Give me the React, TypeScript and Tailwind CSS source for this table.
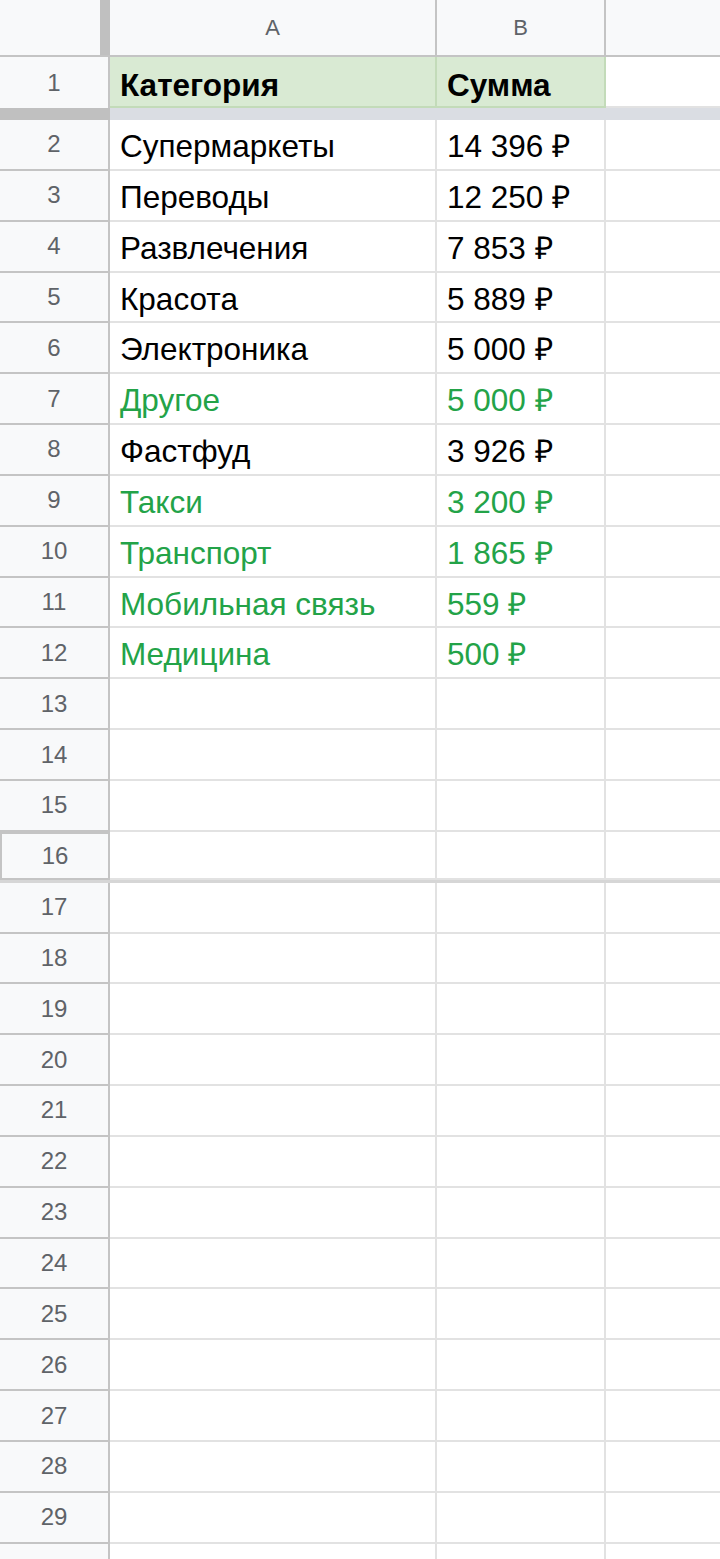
import React from "react";

type Row = { n: number; a?: string; b?: string; green?: boolean };

const data: Row[] = [
  { n: 2, a: "Супермаркеты", b: "14 396 ₽" },
  { n: 3, a: "Переводы", b: "12 250 ₽" },
  { n: 4, a: "Развлечения", b: "7 853 ₽" },
  { n: 5, a: "Красота", b: "5 889 ₽" },
  { n: 6, a: "Электроника", b: "5 000 ₽" },
  { n: 7, a: "Другое", b: "5 000 ₽", green: true },
  { n: 8, a: "Фастфуд", b: "3 926 ₽" },
  { n: 9, a: "Такси", b: "3 200 ₽", green: true },
  { n: 10, a: "Транспорт", b: "1 865 ₽", green: true },
  { n: 11, a: "Мобильная связь", b: "559 ₽", green: true },
  { n: 12, a: "Медицина", b: "500 ₽", green: true },
];

for (let i = 13; i <= 30; i++) data.push({ n: i });

export default function App() {
  return (
    <div className="w-[720px] h-[1559px] overflow-hidden bg-white font-['Liberation_Sans',Arial,sans-serif]">
      {/* Column header */}
      <div className="flex h-[57px] border-b-2 border-[#c4c4c4] bg-[#f8f9fa]">
        <div className="w-[100px] shrink-0" />
        <div className="w-[10px] shrink-0 bg-[#c0c0c0]" />
        <div className="w-[327px] shrink-0 border-r-2 border-[#c4c4c4] flex items-center justify-center text-[22px] text-[#5f6368]">
          A
        </div>
        <div className="w-[169px] shrink-0 border-r-2 border-[#c4c4c4] flex items-center justify-center text-[22px] text-[#5f6368]">
          B
        </div>
        <div className="flex-1" />
      </div>

      {/* Row 1 */}
      <div className="flex h-[51px]">
        <div className="w-[110px] shrink-0 border-r-2 border-[#c4c4c4] bg-[#f8f9fa] flex items-center justify-center text-[24px] text-[#5f6368]">
          1
        </div>
        <div className="w-[327px] shrink-0 bg-[#d9ead3] border-r-2 border-b-2 border-[#c3dbb9] pl-[10px] pt-[13px] text-[31.5px] leading-[31px] font-bold text-black whitespace-nowrap">
          Категория
        </div>
        <div className="w-[169px] shrink-0 bg-[#d9ead3] border-r-2 border-b-2 border-[#c3dbb9] pl-[10px] pt-[13px] text-[31.5px] leading-[31px] font-bold text-black whitespace-nowrap">
          Сумма
        </div>
        <div className="flex-1 border-b-2 border-[#e2e2e2]" />
      </div>

      {/* Freeze bar */}
      <div className="flex h-[12px]">
        <div className="w-[110px] shrink-0 bg-[#c0c0c0]" />
        <div className="flex-1 bg-[#dadde3]" />
      </div>

      {/* Data rows */}
      {data.map((r) => (
        <div
          key={r.n}
          className={`flex h-[50.85px] ${r.n === 16 ? "border-b-[3px] border-[#d6d6d6]" : ""}`}
        >
          <div
            className={`w-[110px] shrink-0 border-r-2 border-b-2 border-[#c4c4c4] bg-[#f8f9fa] flex items-center justify-center text-[24px] text-[#5f6368] ${r.n === 16 ? "border-l-2 border-t-2" : ""}`}
          >
            {r.n}
          </div>
          <div
            className={`w-[327px] shrink-0 border-r-2 border-b-2 border-[#e2e2e2] pl-[10px] pt-[11px] text-[31.5px] leading-[31px] whitespace-nowrap ${r.green ? "text-[#23a348]" : "text-black"}`}
          >
            {r.a}
          </div>
          <div
            className={`w-[169px] shrink-0 border-r-2 border-b-2 border-[#e2e2e2] pl-[10px] pt-[11px] text-[31.5px] leading-[31px] whitespace-nowrap ${r.green ? "text-[#23a348]" : "text-black"}`}
          >
            {r.b}
          </div>
          <div className="flex-1 border-b-2 border-[#e2e2e2]" />
        </div>
      ))}
    </div>
  );
}
